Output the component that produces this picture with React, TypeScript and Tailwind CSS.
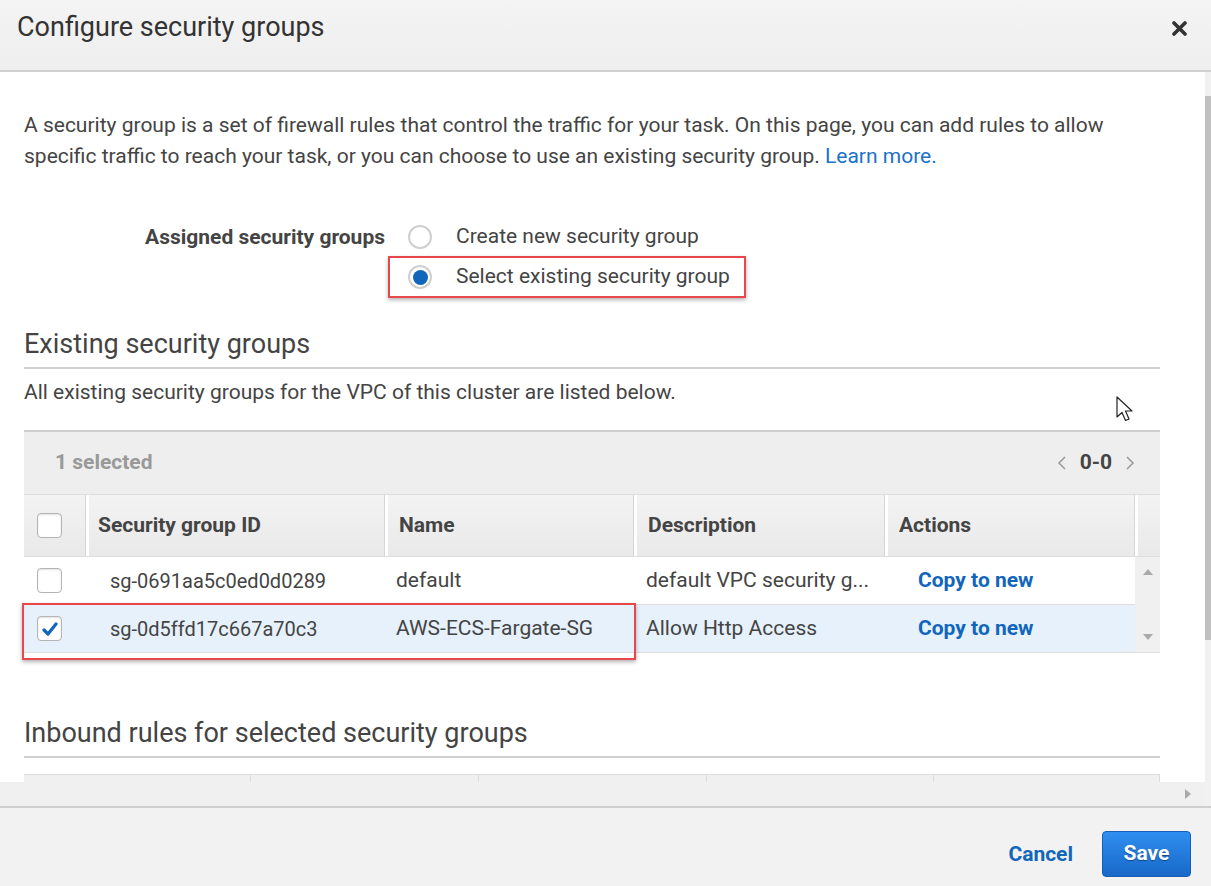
import React from "react";

const font = { fontFamily: "Roboto, 'Noto Sans', sans-serif" };

type Row = { id: string; name: string; desc: string; checked: boolean };

const rows: Row[] = [
  { id: "sg-0691aa5c0ed0d0289", name: "default", desc: "default VPC security g...", checked: false },
  { id: "sg-0d5ffd17c667a70c3", name: "AWS-ECS-Fargate-SG", desc: "Allow Http Access", checked: true },
];

const Checkbox = ({ checked }: { checked?: boolean }) => (
  <span className="flex h-[25px] w-[25px] shrink-0 items-center justify-center rounded-[4px] border border-[#b4b4b4] bg-white shadow-[inset_0_1px_2px_rgba(0,0,0,0.12)]">
    {checked && (
      <svg width="16" height="14" viewBox="0 0 16 14">
        <path d="M2 8 L6 12 L14 2" fill="none" stroke="#1166bb" strokeWidth="3.2" strokeLinecap="round" strokeLinejoin="round" />
      </svg>
    )}
  </span>
);

const Radio = ({ checked }: { checked?: boolean }) => (
  <span className="flex h-[24px] w-[24px] shrink-0 items-center justify-center rounded-full border-2 border-[#cfcfcf] bg-white">
    {checked && <span className="h-[15px] w-[15px] rounded-full bg-[#1166bb]" />}
  </span>
);

export default function App() {
  return (
    <div className="relative flex h-[886px] w-[1211px] flex-col overflow-hidden bg-white text-[#444]" style={font}>
      {/* Header */}
      <div className="flex h-[72px] shrink-0 items-start justify-between border-b-2 border-[#cfcfcf] bg-gradient-to-b from-[#f4f4f4] to-[#eeeeee] pl-[17px] pr-[24px]">
        <h1 className="mt-[11px] text-[27px] leading-[32px] text-[#333]">Configure security groups</h1>
        <svg className="mt-[21px]" width="15" height="15" viewBox="0 0 15 15">
          <path d="M2 2 L13 13 M13 2 L2 13" stroke="#333" strokeWidth="3.6" strokeLinecap="round" />
        </svg>
      </div>

      {/* Middle */}
      <div className="flex min-h-0 flex-1">
        <div className="flex min-w-0 flex-1 flex-col">
          <div className="relative min-h-0 flex-1 overflow-hidden pl-[24px] pr-[45px] pt-[38px]">
            <p className="text-[21px] leading-[31px]">
              <span className="block">
                A security group is a set of firewall rules that control the traffic for your task. On this page, you can add rules to allow
              </span>
              <span className="block">
                <span>specific traffic to reach your task, or you can choose to use an existing security group. </span>
                <a className="text-[#1a73c8]">Learn more.</a>
              </span>
            </p>

            {/* Radio group */}
            <div className="mt-[47px] flex">
              <div className="w-[361px] pt-[6px] text-right text-[21px] font-bold leading-[24px]">Assigned security groups</div>
              <div className="ml-[3px] flex flex-col gap-[1px]">
                <label className="flex h-[36px] items-center whitespace-nowrap border-2 border-transparent pl-[18px]">
                  <Radio />
                  <span className="ml-[24px] text-[21px]">Create new security group</span>
                </label>
                <label className="flex h-[42px] w-[358px] items-center whitespace-nowrap border-2 border-[#e8474b] pl-[18px] shadow-[0_2px_4px_rgba(0,0,0,0.3)]">
                  <Radio checked />
                  <span className="ml-[24px] text-[21px]">Select existing security group</span>
                </label>
              </div>
            </div>

            {/* Existing security groups */}
            <h2 className="mt-[30px] border-b-2 border-[#d0d0d0] pb-[7px] text-[27px] leading-[32px] text-[#444]">Existing security groups</h2>
            <p className="mt-[10px] text-[21px] leading-[26px]">All existing security groups for the VPC of this cluster are listed below.</p>

            <div className="relative mt-[25px] border-t-2 border-[#cfcfcf]">
              <div className="flex h-[62px] items-center justify-between bg-[#eeeeee] pl-[31px] pr-[25px]">
                <span className="text-[21px] font-bold text-[#999]">1 selected</span>
                <div className="flex items-center gap-[13px]">
                  <svg width="10" height="16" viewBox="0 0 10 16"><path d="M8 2 L2 8 L8 14" fill="none" stroke="#999" strokeWidth="1.5" /></svg>
                  <span className="text-[21px] font-bold text-[#444]">0-0</span>
                  <svg width="10" height="16" viewBox="0 0 10 16"><path d="M2 2 L8 8 L2 14" fill="none" stroke="#999" strokeWidth="1.5" /></svg>
                </div>
              </div>

              {/* Header row */}
              <div className="flex h-[63px] border-y border-[#dddddd] bg-gradient-to-b from-[#f3f3f3] to-[#e9e9e9] text-[21px] font-bold">
                <div className="flex w-[62px] items-center pl-[13px]"><Checkbox /></div>
                <div className="flex w-[299px] items-center border-l-[3px] border-white pl-[9px] shadow-[-1px_0_0_#d6d6d6]">Security group ID</div>
                <div className="flex w-[249px] items-center border-l-[3px] border-white pl-[11px] shadow-[-1px_0_0_#d6d6d6]">Name</div>
                <div className="flex w-[251px] items-center border-l-[3px] border-white pl-[11px] shadow-[-1px_0_0_#d6d6d6]">Description</div>
                <div className="flex w-[250px] items-center border-l-[3px] border-white pl-[11px] shadow-[-1px_0_0_#d6d6d6]">Actions</div>
                <div className="flex-1 border-l-[3px] border-white shadow-[-1px_0_0_#d6d6d6]" />
              </div>

              {/* Body rows */}
              <div className="flex">
                <div className="flex w-[1111px] flex-col">
                  {rows.map((r) => (
                    <div
                      key={r.id}
                      className={`flex h-[48px] items-center whitespace-nowrap border-b border-[#dddddd] text-[21px] ${r.checked ? "bg-[#e6f1fc]" : "bg-white"}`}
                    >
                      <div className="flex w-[62px] pl-[13px]"><Checkbox checked={r.checked} /></div>
                      <div className="w-[310px] pl-[24px] text-[20px]">{r.id}</div>
                      <div className="w-[250px]">{r.name}</div>
                      <div className="w-[272px]">{r.desc}</div>
                      <div className="font-bold text-[#1166bb]">Copy to new</div>
                    </div>
                  ))}
                </div>
                <div className="flex w-[25px] flex-col items-center justify-between border-b border-[#dddddd] bg-[#f0f0f0] py-[12px]">
                  <svg width="10" height="6" viewBox="0 0 10 6"><path d="M0 6 L5 0 L10 6 Z" fill="#aaa" /></svg>
                  <svg width="10" height="6" viewBox="0 0 10 6"><path d="M0 0 L5 6 L10 0 Z" fill="#aaa" /></svg>
                </div>
              </div>

              {/* annotation box */}
              <div className="pointer-events-none absolute left-[-2px] top-[171px] h-[57px] w-[614px] border-2 border-[#e8474b] shadow-[0_2px_4px_rgba(0,0,0,0.3)]" />
            </div>

            {/* Inbound rules */}
            <h2 className="mt-[64px] border-b-2 border-[#d0d0d0] pb-[7px] text-[27px] leading-[32px] text-[#444]">Inbound rules for selected security groups</h2>
            <div className="mt-[16px] flex h-[40px] border-t border-[#dddddd] bg-[#f0f0f0]">
              <div className="w-[227px] border-r border-[#dddddd]" />
              <div className="w-[228px] border-r border-[#dddddd]" />
              <div className="w-[228px] border-r border-[#dddddd]" />
              <div className="w-[227px] border-r border-[#dddddd]" />
              <div className="flex-1 border-r border-[#dddddd]" />
            </div>

            {/* mouse pointer */}
            <svg className="pointer-events-none absolute left-[1116px] top-[324px]" width="20" height="28" viewBox="0 0 20 28">
              <path d="M1 1 L1 21 L6 16.5 L9.5 24.5 L13 23 L9.5 15 L16 15 Z" fill="#fff" stroke="#222" strokeWidth="1.2" strokeLinejoin="round" />
            </svg>
          </div>

          {/* horizontal scrollbar */}
          <div className="flex h-[24px] shrink-0 items-center justify-end bg-[#f0f0f0] pr-[14px]">
            <svg width="6" height="10" viewBox="0 0 6 10"><path d="M0 0 L6 5 L0 10 Z" fill="#aaa" /></svg>
          </div>
        </div>

        {/* vertical scrollbar */}
        <div className="flex w-[6px] shrink-0 flex-col bg-[#f1f1f1] pt-[24px]">
          <div className="h-[544px] bg-[#c1c1c1]" />
        </div>
      </div>

      {/* Footer */}
      <div className="flex h-[80px] shrink-0 items-start justify-end gap-[29px] border-t-2 border-[#cfcfcf] bg-[#f2f2f2] pr-[20px] pt-[23px]">
        <span className="mt-[9px] text-[21px] font-bold leading-[28px] text-[#1166bb]">Cancel</span>
        <button className="h-[46px] w-[89px] rounded-[4px] border border-[#1560b5] bg-gradient-to-b from-[#2f8ff0] to-[#1868c8] text-[21px] font-bold text-white [text-shadow:0_1px_1px_rgba(0,0,0,0.4)]">
          Save
        </button>
      </div>
    </div>
  );
}
